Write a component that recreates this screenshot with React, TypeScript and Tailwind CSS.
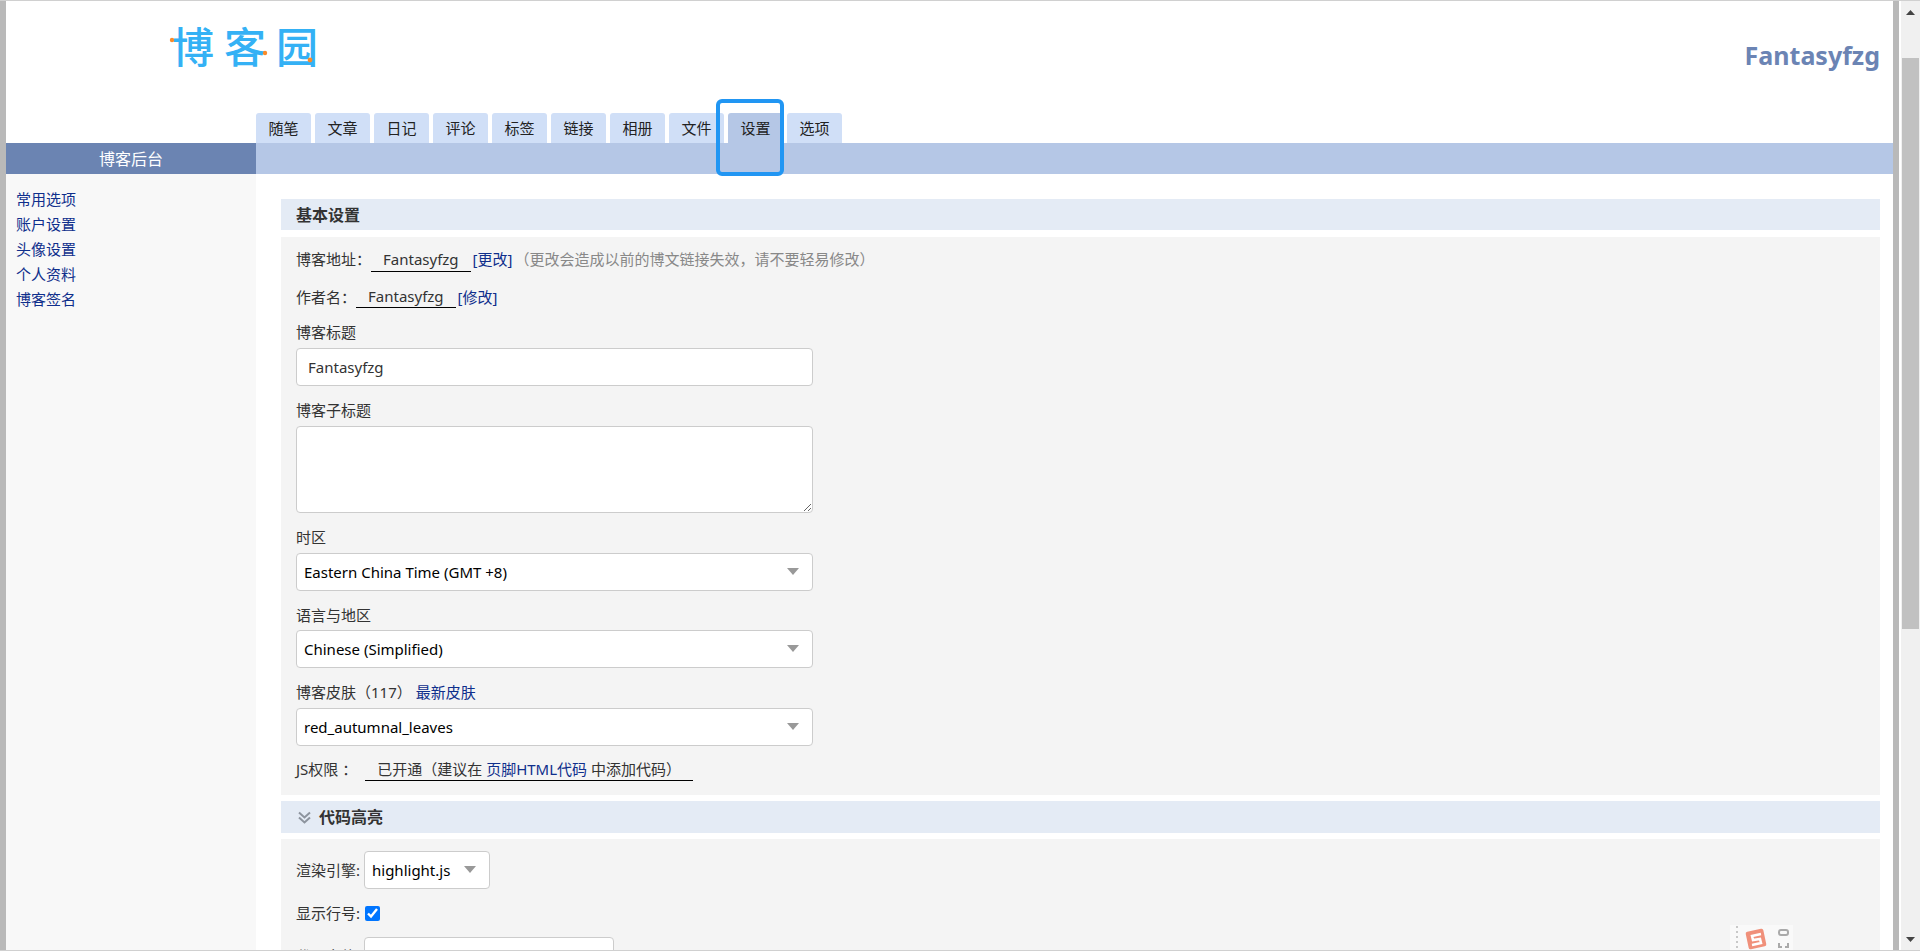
import React from 'react';

const TABS = ['随笔', '文章', '日记', '评论', '标签', '链接', '相册', '文件', '设置', '选项'];
const ACTIVE_TAB = '设置';
const SIDE_LINKS = ['常用选项', '账户设置', '头像设置', '个人资料', '博客签名'];

interface SelectFieldProps {
  id: string;
  value: string;
  className?: string;
}

const SelectField: React.FC<SelectFieldProps> = ({ id, value, className = 'w-full' }) => (
  <div className={`relative ${className}`}>
    <select id={id} className="block h-[38px] w-full appearance-none rounded border border-[#ccc] bg-white pl-[7px] text-[15px] text-black">
      <option>{value}</option>
    </select>
    <svg className="pointer-events-none absolute right-[14px] top-[15px]" width="12" height="7" viewBox="0 0 12 7">
      <path d="M0 0h12L6 7z" fill="#999" />
    </svg>
  </div>
);

const Logo: React.FC = () => (
  <a href="#" aria-label="博客园" className="relative ml-[162px] mt-5 flex h-14 w-[158px] items-center gap-2.5 pb-1 pl-1 text-[42px] font-medium leading-none text-[#34b1f5]">
    <span>博</span>
    <span>客</span>
    <span>园</span>
    <svg className="absolute inset-0" width="158" height="56" viewBox="0 0 158 56" fill="#f98b2b">
      <circle cx="4" cy="19" r="2.2" />
      <circle cx="97" cy="32" r="2.2" />
      <circle cx="142" cy="39" r="2.4" />
    </svg>
  </a>
);

const Header: React.FC = () => (
  <header>
    <div className="flex h-[92px] items-start justify-between">
      <Logo />
      <h1 className="mr-[13px] mt-[34px] text-[25px] font-bold leading-10 text-[#6b84b4]">
        <a href="#">Fantasyfzg</a>
      </h1>
    </div>
    <nav className="ml-[250px] mt-5 flex gap-1">
      {TABS.map((tab) => (
        <div key={tab} className="relative">
          <a
            href="#"
            className={`block h-[30px] w-[55px] rounded-t-[3px] text-center text-[15px] leading-[30px] text-[#222] ${tab === ACTIVE_TAB ? 'bg-[#b5c7e6]' : 'bg-[#d0dff7]'}`}
          >
            {tab}
          </a>
          {tab === ACTIVE_TAB && (
            <div className="pointer-events-none absolute -left-3 -top-3.5 z-10 h-[77px] w-[68px] rounded-md border-4 border-[#2196f3]" />
          )}
        </div>
      ))}
    </nav>
    <div className="flex h-[31px] bg-[#b5c7e6]">
      <div className="w-[250px] bg-[#6b84b2] text-center text-base leading-8 text-white">博客后台</div>
    </div>
  </header>
);

const Sidebar: React.FC = () => (
  <aside className="w-[250px] shrink-0 bg-[#f8f8f8] px-2.5 pt-[13px]">
    <ul>
      {SIDE_LINKS.map((link) => (
        <li key={link} className="leading-[25px]">
          <a href="#" className="text-[#0f2f8c]">{link}</a>
        </li>
      ))}
    </ul>
  </aside>
);

const BasicSettings: React.FC = () => (
  <section>
    <h2 className="h-[31px] bg-[#e4ebf5] pl-[15px] text-base font-bold leading-8">基本设置</h2>
    <div className="mt-[7px] bg-[#f4f4f4] px-[15px] pb-3.5 pt-2.5">
      <div className="flex h-[26px] items-start leading-6">
        <span>博客地址：</span>
        <span className="border-b border-black px-3">Fantasyfzg</span>
        <a href="#" className="ml-0.5 text-[#0f2f8c]">[更改]</a>
        <span className="ml-0.5 text-[#888]">（更改会造成以前的博文链接失效，请不要轻易修改）</span>
      </div>
      <div className="mt-3 flex h-6 items-start leading-6">
        <span>作者名：</span>
        <span className="border-b border-black px-3 leading-[22px]">Fantasyfzg</span>
        <a href="#" className="ml-0.5 text-[#0f2f8c]">[修改]</a>
      </div>
      <div className="w-[517px]">
        <label htmlFor="title" className="mt-[11px] block leading-6">博客标题</label>
        <input id="title" defaultValue="Fantasyfzg" className="mt-1 block h-[38px] w-full rounded border border-[#ccc] bg-white px-[11px]" />
        <label htmlFor="subtitle" className="mt-3 block leading-6">博客子标题</label>
        <textarea id="subtitle" className="mt-1 block h-[87px] w-full rounded border border-[#ccc] bg-white px-[11px]" />
        <label htmlFor="timezone" className="mb-1 mt-3 block leading-6">时区</label>
        <SelectField id="timezone" value="Eastern China Time (GMT +8)" />
        <label htmlFor="lang" className="mb-[3px] mt-3 block leading-6">语言与地区</label>
        <SelectField id="lang" value="Chinese (Simplified)" />
        <div className="mb-1 mt-3 flex leading-6">
          <label htmlFor="skin">博客皮肤（117）</label>
          <a href="#" className="ml-1 text-[#0f2f8c]">最新皮肤</a>
        </div>
        <SelectField id="skin" value="red_autumnal_leaves" />
      </div>
      <div className="mt-3 flex items-start gap-2 leading-[22px]">
        <span>JS权限 ：</span>
        <span className="border-b border-black px-3">
          已开通（建议在 <a href="#" className="text-[#0f2f8c]">页脚HTML代码</a> 中添加代码）
        </span>
      </div>
    </div>
  </section>
);

const CodeHighlight: React.FC = () => (
  <section className="mt-1.5">
    <h2 className="flex h-8 items-center gap-2 bg-[#e4ebf5] pl-[17px] text-base font-bold">
      <svg width="13" height="13" viewBox="0 0 13 13" fill="none" stroke="#8d949e" strokeWidth="2">
        <path d="M1 1.5l5.500 5 5.500-5M1 6.500l5.500 5 5.500-5" />
      </svg>
      代码高亮
    </h2>
    <div className="mt-1.5 bg-[#f4f4f4] px-[15px] pb-6 pt-3">
      <div className="flex items-center gap-1">
        <label htmlFor="engine" className="w-16 whitespace-nowrap">渲染引擎:</label>
        <SelectField id="engine" value="highlight.js" className="w-[126px]" />
      </div>
      <div className="mt-3 flex h-6 items-center gap-1">
        <label htmlFor="line-no" className="w-16 whitespace-nowrap">显示行号:</label>
        <input id="line-no" type="checkbox" defaultChecked className="ml-px h-[15px] w-[15px] accent-[#0075ff]" />
      </div>
      <div className="mt-3 flex items-center gap-1">
        <label htmlFor="code-font" className="w-16 whitespace-nowrap">代码字体:</label>
        <SelectField id="code-font" value="Source Code Pro" className="w-[250px]" />
      </div>
    </div>
  </section>
);

const ScrollBar: React.FC = () => (
  <div className="flex w-[21px] shrink-0 flex-col items-center border-l-2 border-white bg-[#f0f0f0]">
    <svg className="mt-[9px] shrink-0" width="9" height="5" viewBox="0 0 9 5"><path d="M0 5h9L4.500 0z" fill="#444" /></svg>
    <div className="mt-[43px] h-[60.2%] w-[17px] bg-[#c1c1c1]" />
    <svg className="mb-2 mt-auto shrink-0" width="9" height="5" viewBox="0 0 9 5"><path d="M0 0h9L4.500 5z" fill="#444" /></svg>
  </div>
);

const ImeBar: React.FC = () => (
  <div className="absolute bottom-0 right-[100px] flex h-[25px] w-[63px] items-start bg-[#f9f9f9] pl-1">
    <svg width="56" height="25" viewBox="0 0 56 25" fill="none">
      <path d="M3 1v24" stroke="#c8c8c8" strokeWidth="2" strokeDasharray="2 3" />
      <rect x="13" y="5" width="18" height="18" rx="2" fill="#f0907a" transform="rotate(-12 22 14)" />
      <path d="M27 9l-9 2 1 4 7-1 1 4-9 2" stroke="#fff" strokeWidth="2.500" />
      <rect x="45" y="5" width="9" height="5" rx="2" stroke="#aaa" strokeWidth="2" />
      <path d="M45 18v4h3M54 18v4h-3" stroke="#aaa" strokeWidth="2" />
    </svg>
  </div>
);

const App: React.FC = () => (
  <div className="flex h-screen overflow-hidden border-y border-[#d0d0d0] bg-white font-['Noto_Sans','Noto_Sans_CJK_SC',sans-serif] text-[15px] text-[#333]">
    <div className="relative flex min-w-0 flex-1 flex-col overflow-hidden border-x-[6px] border-[#b9b9b9]">
      <Header />
      <div className="flex min-h-0 flex-1">
        <Sidebar />
        <main className="min-w-0 flex-1 overflow-hidden pl-[25px] pr-[13px] pt-[25px]">
          <BasicSettings />
          <CodeHighlight />
        </main>
      </div>
      <ImeBar />
    </div>
    <ScrollBar />
  </div>
);

export default App;
